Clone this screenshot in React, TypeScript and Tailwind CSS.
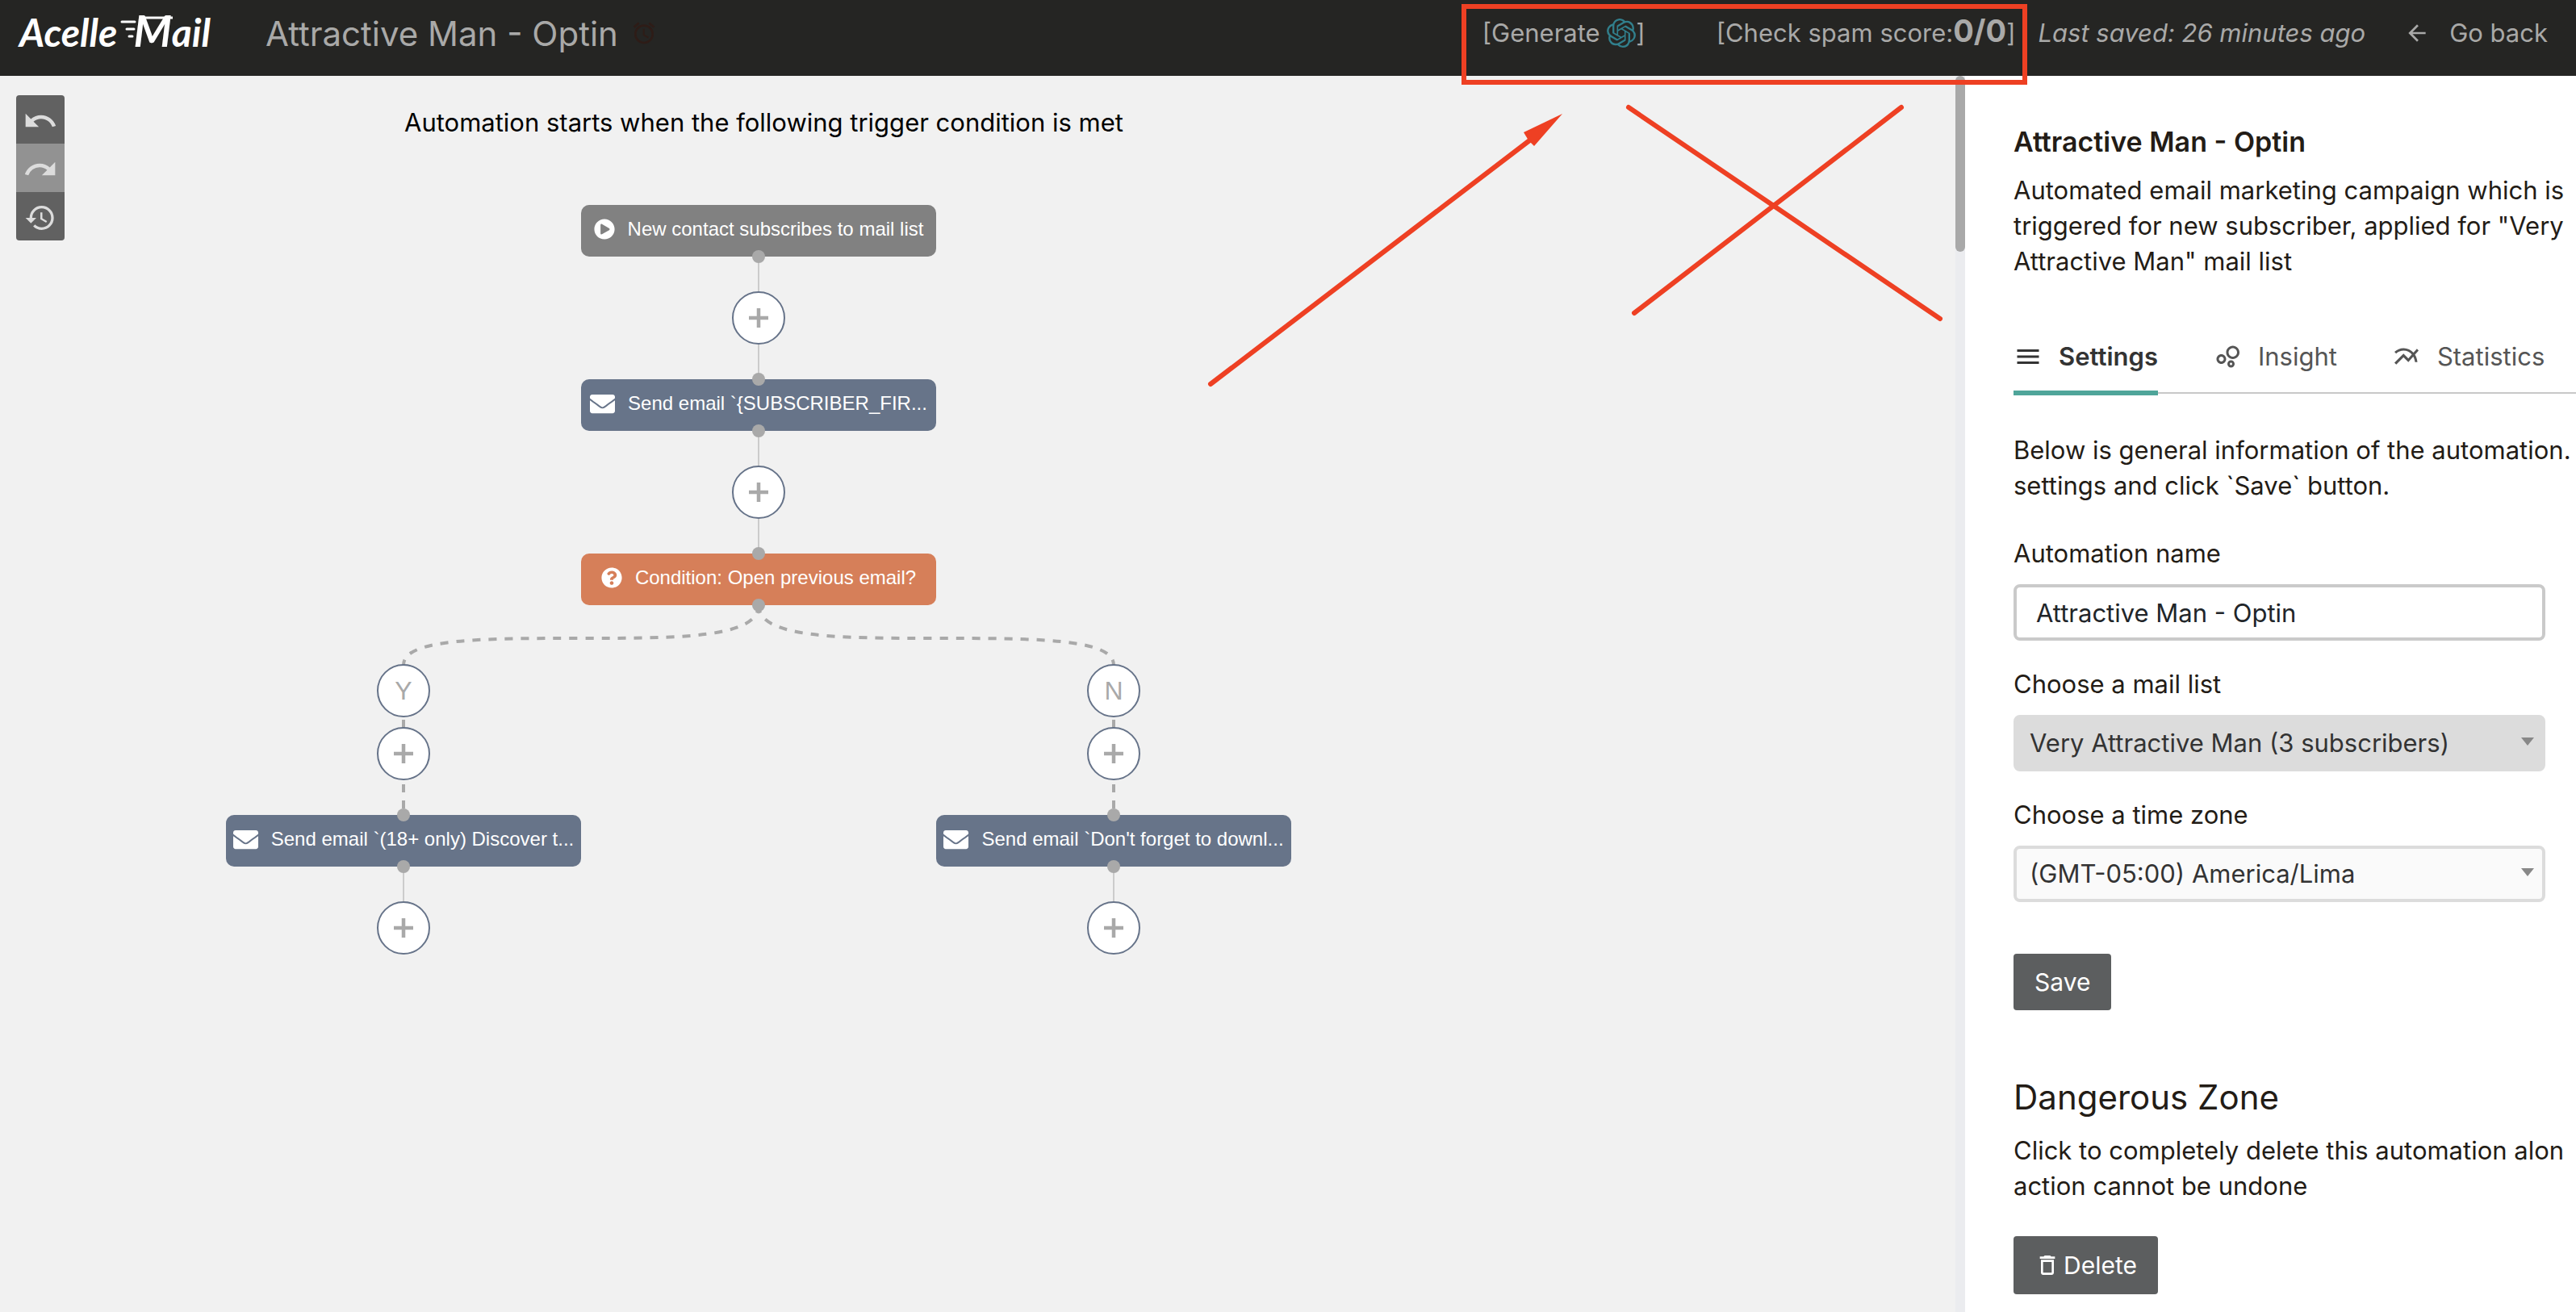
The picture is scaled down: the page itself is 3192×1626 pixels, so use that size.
import React, { useState } from "react";
import { FaEnvelope, FaPlayCircle, FaQuestionCircle } from "react-icons/fa";
import {
  MdAlarm,
  MdArrowBack,
  MdDeleteOutline,
  MdHistory,
  MdMenu,
  MdMultilineChart,
  MdOutlineBubbleChart,
  MdRedo,
  MdUndo,
} from "react-icons/md";
import { SiOpenai } from "react-icons/si";

type NodeType = "trigger" | "email" | "condition";

type FlowNode = {
  id: string;
  type: NodeType;
  label: string;
  x: number;
  y: number;
};

type RoundNode = {
  id: string;
  label: string; // "+" adds an action, Y / N are the branches
  x: number;
  y: number;
};

const nodes: FlowNode[] = [
  { id: "trigger", type: "trigger", label: "New contact subscribes to mail list", x: 720, y: 160 },
  { id: "first", type: "email", label: "Send email `{SUBSCRIBER_FIR...", x: 720, y: 376 },
  { id: "condition", type: "condition", label: "Condition: Open previous email?", x: 720, y: 592 },
  { id: "yes", type: "email", label: "Send email `(18+ only) Discover t...", x: 280, y: 916 },
  { id: "no", type: "email", label: "Send email `Don't forget to downl...", x: 1160, y: 916 },
];

const rounds: RoundNode[] = [
  { id: "add-1", label: "+", x: 940, y: 300 },
  { id: "add-2", label: "+", x: 940, y: 516 },
  { id: "branch-y", label: "Y", x: 500, y: 762 },
  { id: "branch-n", label: "N", x: 1380, y: 762 },
  { id: "add-3", label: "+", x: 500, y: 840 },
  { id: "add-4", label: "+", x: 1380, y: 840 },
  { id: "add-5", label: "+", x: 500, y: 1056 },
  { id: "add-6", label: "+", x: 1380, y: 1056 },
];

// Connection points on the node borders
const dots = [
  [940, 224],
  [940, 376],
  [940, 440],
  [940, 592],
  [940, 656],
  [500, 916],
  [500, 980],
  [1380, 916],
  [1380, 980],
];

const nodeColors: { [key in NodeType]: string } = {
  trigger: "bg-[#818181]",
  email: "bg-[#677489]",
  condition: "bg-[#d67f59]",
};

const tabs = [
  { name: "Settings", icon: MdMenu },
  { name: "Insight", icon: MdOutlineBubbleChart },
  { name: "Statistics", icon: MdMultilineChart },
];

const Logo = () => (
  <a
    href="#"
    aria-label="Acelle Mail"
    className="mb-1 flex items-baseline font-[Lato,sans-serif] text-[48px] leading-[60px] font-bold italic text-white"
  >
    <span>Acelle</span>
    <span className="relative ml-5 text-[54px]">
      M
      {/* Speed lines and the envelope flap */}
      <svg className="absolute -left-4 top-0 h-[60px] w-[76px]" viewBox="0 0 76 60" fill="none" stroke="#fff">
        <path d="M2 19H18M8 28H17M11 37H15" strokeWidth="3" strokeLinecap="round" />
        <path d="M25 14H65" strokeWidth="3" />
      </svg>
    </span>
    <span>ail</span>
  </a>
);

const NodeIcon = ({ type }: { type: NodeType }) => {
  if (type === "trigger") return <FaPlayCircle className="size-[26px] shrink-0" />;
  if (type === "condition") return <FaQuestionCircle className="size-[26px] shrink-0" />;
  return <FaEnvelope className="size-[31px] shrink-0" />;
};

const Header = () => (
  <header className="flex h-[94px] shrink-0 items-center bg-[#252523] pb-3 pl-6 pr-[35px] text-[31px] text-[#a9a9a8]">
    <Logo />
    <h1 className="ml-17 text-[42px]">Attractive Man - Optin</h1>
    <MdAlarm className="ml-4 size-8 text-[#2e1c17]" />
    <div className="ml-auto flex items-center">
      <button className="flex items-center whitespace-pre">
        [Generate <SiOpenai className="size-9 text-[#317f8c]" />]
      </button>
      <button className="ml-22 flex items-baseline">
        [Check spam score:<b className="text-[38px] leading-none">0/0</b>]
      </button>
      <span className="ml-7 italic">Last saved: 26 minutes ago</span>
      <a href="#" className="ml-12 flex items-center gap-6">
        <MdArrowBack className="size-8" />
        Go back
      </a>
    </div>
  </header>
);

const Flow = () => (
  <section className="relative min-w-0 flex-1 overflow-hidden bg-[#f1f1f1]">
    <h2 className="pl-[501px] pt-9 text-[31px] leading-[44px] text-black">
      Automation starts when the following trigger condition is met
    </h2>

    {/* Undo / redo / history */}
    <div className="absolute left-5 top-6 flex flex-col overflow-hidden rounded-sm text-[#dcdcdc]">
      <button aria-label="Undo" className="flex size-[60px] items-center justify-center bg-[#616161] pt-1">
        <MdUndo className="size-11" />
      </button>
      <button aria-label="Redo" className="flex size-[60px] items-center justify-center bg-[#929292] pt-1">
        <MdRedo className="size-11" />
      </button>
      <button aria-label="History" className="flex size-[60px] items-center justify-center bg-[#616161] pt-1">
        <MdHistory className="size-10" />
      </button>
    </div>

    {/* Connectors */}
    <svg className="absolute left-0 top-0 h-[1100px] w-[1620px]" viewBox="0 0 1620 1100" fill="none">
      <path d="M940 224V376M940 440V592M500 980V1056M1380 980V1056" stroke="#ccc" strokeWidth="2" />
      <g stroke="#a9a9a9" strokeWidth="4" strokeDasharray="10 10">
        <path d="M940 656C940 697 840 697 720 697C600 697 500 697 500 730" />
        <path d="M940 656C940 697 1040 697 1160 697C1280 697 1380 697 1380 730" />
        <path d="M500 758V916" />
        <path d="M1380 758V916" />
      </g>
    </svg>

    {nodes.map((node) => (
      <button
        key={node.id}
        style={{ left: node.x, top: node.y }}
        className={`absolute flex h-16 w-[440px] items-center justify-center gap-4 whitespace-nowrap rounded-[10px] pb-1 font-['Liberation_Sans',Arial,sans-serif] text-[24px] text-white ${nodeColors[node.type]}`}
      >
        <NodeIcon type={node.type} />
        {node.label}
      </button>
    ))}

    {rounds.map((round) => (
      <button
        key={round.id}
        aria-label={round.label === "+" ? "Add action" : undefined}
        style={{ left: round.x - 33, top: round.y - 33 }}
        className="absolute flex size-[66px] items-center justify-center rounded-full border-2 border-[#667389] bg-white font-['Liberation_Sans',Arial,sans-serif] text-[32px] text-[#a9a9a9]"
      >
        {round.label === "+" ? (
          <svg className="size-6" viewBox="0 0 24 24" stroke="currentColor" strokeWidth="4.5">
            <path d="M12 0V24M0 12H24" />
          </svg>
        ) : (
          round.label
        )}
      </button>
    ))}

    <svg className="absolute left-0 top-0 h-[1100px] w-[1620px] pointer-events-none" viewBox="0 0 1620 1100">
      {dots.map(([x, y]) => (
        <circle key={`${x}-${y}`} cx={x} cy={y} r="8" fill="#a9a9a9" />
      ))}
    </svg>
  </section>
);

const SelectBox = ({ id, option, disabled }: { id: string; option: string; disabled?: boolean }) => (
  <div className="relative">
    <select
      id={id}
      disabled={disabled}
      className="h-[70px] w-full appearance-none rounded-lg border-4 border-[#dcdcdc] bg-[#fafafa] px-4 text-[#333] opacity-100 disabled:bg-[#dcdcdc]"
    >
      <option>{option}</option>
    </select>
    <svg className="absolute right-[14px] top-7 h-[10px] w-4 pointer-events-none" viewBox="0 0 16 10" fill="#888">
      <path d="M0 0H16L8 10Z" />
    </svg>
  </div>
);

const Sidebar = () => {
  const [activeTab, setActiveTab] = useState("Settings");
  const [name, setName] = useState("Attractive Man - Optin");

  return (
    <aside className="w-[757px] shrink-0 overflow-hidden bg-white pl-[60px] pt-[60px] text-[31px] leading-[44px] text-[#231c16]">
      <h2 className="text-[34px] font-semibold">Attractive Man - Optin</h2>
      <p className="mt-4 whitespace-nowrap">
        Automated email marketing campaign which is
        <br />
        triggered for new subscriber, applied for "Very
        <br />
        Attractive Man" mail list
      </p>

      <div className="mt-[74px] flex gap-17 border-b-2 border-[#c8c8c8]">
        {tabs.map((tab) => (
          <button
            key={tab.name}
            onClick={() => setActiveTab(tab.name)}
            className={`-mb-1 flex items-center gap-5 border-b-6 pb-5 ${
              activeTab === tab.name
                ? "border-[#4fa59a] font-semibold text-[#333]"
                : "border-transparent text-[#555]"
            }`}
          >
            <tab.icon className="size-9" />
            {tab.name}
          </button>
        ))}
      </div>

      <p className="mt-12 whitespace-nowrap">
        Below is general information of the automation.
        <br />
        settings and click `Save` button.
      </p>

      <div className="mr-[38px] mt-10 flex flex-col gap-8">
        <div>
          <label htmlFor="name" className="mb-4 block">
            Automation name
          </label>
          <input
            id="name"
            type="text"
            value={name}
            onChange={(e) => setName(e.target.value)}
            className="block h-[70px] w-full rounded-lg border-4 border-[#cacaca] bg-white px-6 text-[#212529]"
          />
        </div>
        <div>
          <label htmlFor="mail-list" className="mb-4 block">
            Choose a mail list
          </label>
          <SelectBox id="mail-list" option="Very Attractive Man (3 subscribers)" disabled />
        </div>
        <div>
          <label htmlFor="time-zone" className="mb-4 block">
            Choose a time zone
          </label>
          <SelectBox id="time-zone" option="(GMT-05:00) America/Lima" />
        </div>
      </div>

      <button className="mt-16 h-[70px] rounded-sm bg-[#5c5e5f] px-[26px] text-[30px] text-white">Save</button>

      <h2 className="mt-[86px] text-[42px]">Dangerous Zone</h2>
      <p className="mt-[22px] whitespace-nowrap">
        Click to completely delete this automation alon
        <br />
        action cannot be undone
      </p>
      <button className="mt-10 flex h-[72px] items-center gap-1 rounded-sm bg-[#5c5e5f] px-[26px] text-[30px] text-white">
        <MdDeleteOutline className="size-8" />
        Delete
      </button>
    </aside>
  );
};

// Red marks drawn over the page
const Annotations = () => (
  <svg
    className="absolute left-0 top-0 h-[500px] w-[2520px] pointer-events-none"
    viewBox="0 0 2520 500"
    fill="none"
    stroke="#ee4023"
    strokeWidth="6"
    strokeLinecap="round"
  >
    <rect x="1814" y="8" width="695" height="94" />
    <path d="M1500 476L1898 172" />
    <path d="M1936 141L1888 164L1894 174L1901 181Z" fill="#ee4023" stroke="none" />
    <path d="M2018 133L2404 395M2356 133L2025 388" />
  </svg>
);

const App = () => {
  return (
    <div className="relative flex min-h-screen flex-col font-[Inter,sans-serif]">
      <Header />
      <main className="flex flex-1">
        <Flow />
        <div className="w-3 shrink-0 bg-[#ebecef]">
          <div className="h-[218px] rounded-full bg-[#a9a9a9]" />
        </div>
        <Sidebar />
      </main>
      <Annotations />
    </div>
  );
};

export default App;
